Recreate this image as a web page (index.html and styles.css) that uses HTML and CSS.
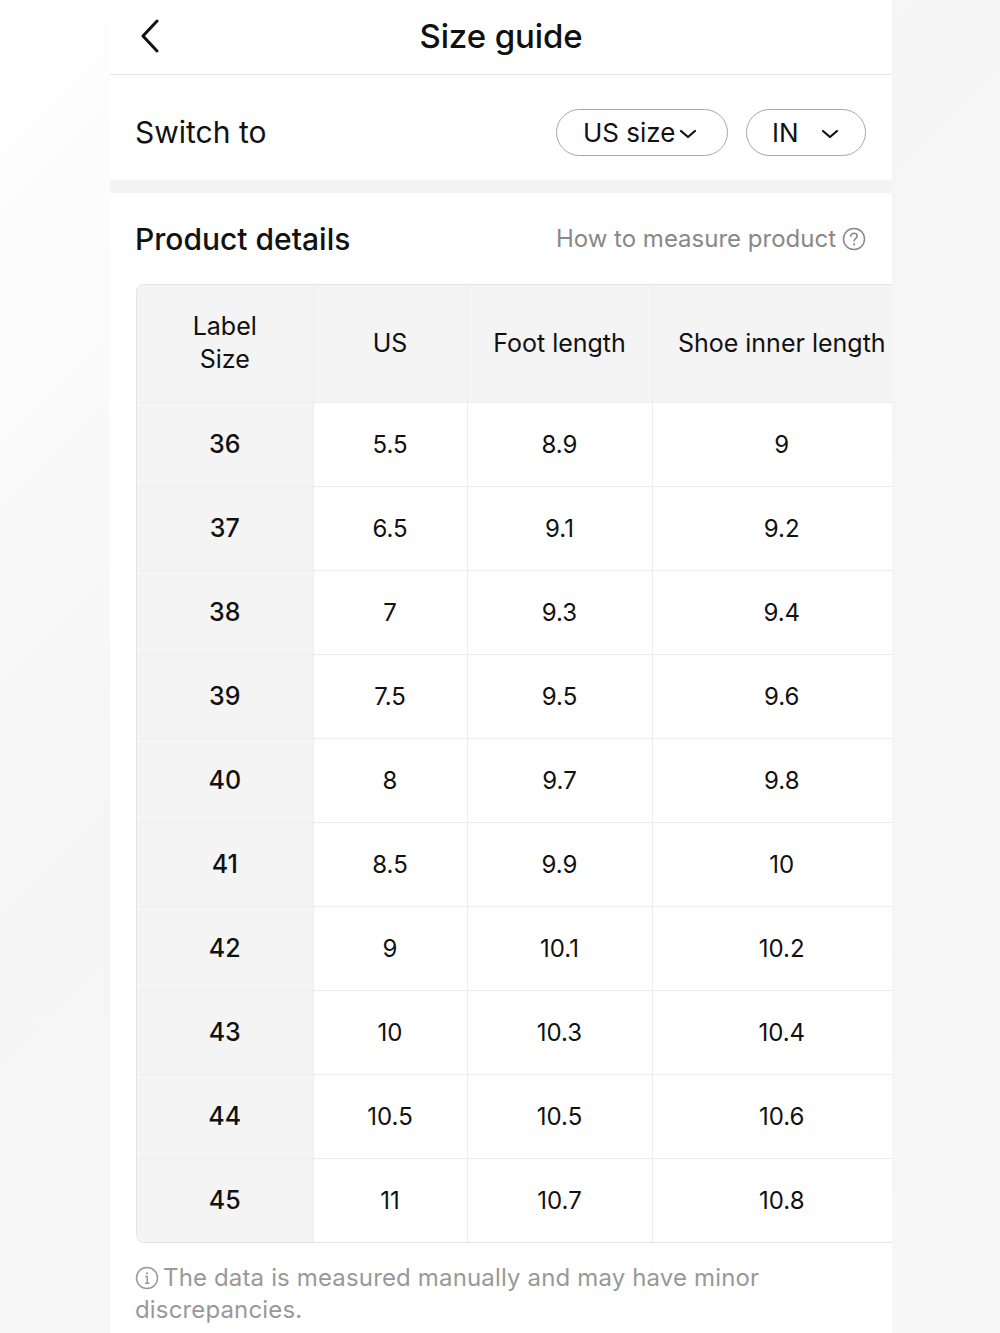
FILE: index.html
```html
<!DOCTYPE html>
<html lang="en">
<head>
<meta charset="utf-8">
<title>Size guide</title>
<link rel="stylesheet" href="styles.css">
</head>
<body>
<div class="panel">
  <header class="topbar">
    <svg class="back" width="20" height="34" viewBox="0 0 20 34"><path d="M16 2 L2 17 L16 32" fill="none" stroke="#111" stroke-width="3" stroke-linecap="round" stroke-linejoin="round"/></svg>
    <h1 class="title">Size guide</h1>
  </header>
  <section class="switch">
    <span class="switch-label">Switch to</span>
    <div class="pills">
      <div class="pill pill-us"><span>US size</span><svg width="18" height="10" viewBox="0 0 18 10"><path d="M2 2 L9 8 L16 2" fill="none" stroke="#111" stroke-width="2.2" stroke-linecap="round" stroke-linejoin="round"/></svg></div>
      <div class="pill pill-in"><span>IN</span><svg width="18" height="10" viewBox="0 0 18 10"><path d="M2 2 L9 8 L16 2" fill="none" stroke="#111" stroke-width="2.2" stroke-linecap="round" stroke-linejoin="round"/></svg></div>
    </div>
  </section>
  <div class="gap"></div>
  <section class="details">
    <div class="details-head">
      <h2 class="details-title">Product details</h2>
      <span class="measure">How to measure product<svg width="24" height="24" viewBox="0 0 24 24"><circle cx="12" cy="12" r="10.5" fill="none" stroke="#888" stroke-width="1.5"/><path d="M8.8 9.3 C8.8 7.4 10.2 6.3 12 6.3 C13.8 6.3 15.2 7.5 15.2 9.1 C15.2 11.2 12.1 11.5 12.1 14" fill="none" stroke="#888" stroke-width="1.6" stroke-linecap="round"/><circle cx="12.1" cy="17.4" r="1.1" fill="#888"/></svg></span>
    </div>
    <div class="table-wrap">
      <table class="sizes">
        <thead>
          <tr><th class="c1">Label<br>Size</th><th class="c2">US</th><th class="c3">Foot length</th><th class="c4">Shoe inner length</th></tr>
        </thead>
        <tbody>
          <tr><td>36</td><td>5.5</td><td>8.9</td><td>9</td></tr>
          <tr><td>37</td><td>6.5</td><td>9.1</td><td>9.2</td></tr>
          <tr><td>38</td><td>7</td><td>9.3</td><td>9.4</td></tr>
          <tr><td>39</td><td>7.5</td><td>9.5</td><td>9.6</td></tr>
          <tr><td>40</td><td>8</td><td>9.7</td><td>9.8</td></tr>
          <tr><td>41</td><td>8.5</td><td>9.9</td><td>10</td></tr>
          <tr><td>42</td><td>9</td><td>10.1</td><td>10.2</td></tr>
          <tr><td>43</td><td>10</td><td>10.3</td><td>10.4</td></tr>
          <tr><td>44</td><td>10.5</td><td>10.5</td><td>10.6</td></tr>
          <tr><td>45</td><td>11</td><td>10.7</td><td>10.8</td></tr>
        </tbody>
      </table>
    </div>
    <p class="note"><svg class="info" width="24" height="24" viewBox="0 0 24 24"><circle cx="12" cy="12" r="10.5" fill="none" stroke="#999" stroke-width="1.5"/><circle cx="12" cy="7.3" r="1.1" fill="#999"/><path d="M10.2 10.4 H12.3 V17.2 M10 17.2 H14.4" fill="none" stroke="#999" stroke-width="1.5"/></svg>The data is measured manually and may have minor discrepancies.</p>
  </section>
</div>
</body>
</html>
```
FILE: styles.css
```css
* { box-sizing: border-box; }
html, body { margin: 0; padding: 0; }
body {
  background: linear-gradient(135deg, #ffffff 0%, #f5f5f5 40%, #f7f7f7 100%);
  font-family: "Inter", "Liberation Sans", Arial, sans-serif;
  color: #111;
  min-height: 1333px;
}
.panel {
  width: 782px;
  margin-left: 110px;
  background: #fff;
  min-height: 1333px;
}
.topbar {
  height: 75px;
  border-bottom: 1px solid #e6e6e6;
  display: flex;
  align-items: center;
  justify-content: center;
  position: relative;
}
.back { position: absolute; left: 31px; top: 19px; }
.title {
  margin: 0 0 2px 0;
  font-size: 33px;
  font-weight: 500;
  letter-spacing: -0.1px;
}
.switch {
  height: 105px;
  display: flex;
  align-items: center;
  justify-content: space-between;
  padding: 9px 26px 0 25px;
}
.switch-label { font-size: 30px; font-weight: 400; }
.pills { display: flex; gap: 18px; }
.pill {
  height: 47px;
  border: 1.5px solid #a8a8a8;
  border-radius: 24px;
  display: flex;
  align-items: center;
  font-size: 26px;
}
.pill-us { width: 172px; padding-left: 26px; gap: 3px; }
.pill-in { width: 120px; padding-left: 25px; gap: 22px; }
.pill svg { margin-top: 3px; }
.gap { height: 13px; background: #f4f4f4; }
.details { padding: 0 0 0 26px; }
.details-head {
  height: 91px;
  display: flex;
  align-items: center;
  justify-content: space-between;
  padding-right: 26px;
}
.details-title { margin: 0 0 0 -1px; font-size: 30px; font-weight: 500; }
.measure {
  display: flex;
  align-items: center;
  gap: 6px;
  color: #888;
  font-size: 24px;
}
.table-wrap {
  overflow: hidden;
  border: 1px solid #e4e4e4;
  border-right: none;
  border-radius: 8px 0 0 8px;
}
.sizes {
  border-collapse: collapse;
  table-layout: fixed;
  width: 774px;
}
.sizes th, .sizes td {
  text-align: center;
  border-left: 1px solid #ececec;
  border-top: 1px solid #ececec;
  padding: 0;
}
.sizes th:first-child, .sizes td:first-child { border-left: none; }
.sizes thead tr th { border-top: none; background: #f4f4f4; height: 117px; font-weight: 400; font-size: 25px; line-height: 33px; }
.sizes td { height: 84px; font-size: 24px; }
.sizes td:first-child { background: #f4f4f4; font-weight: 500; font-size: 25px; }
.c1 { width: 176px; }
.c2 { width: 154px; }
.c3 { width: 185px; }
.c4 { width: 259px; }
.note {
  margin: 19px 26px 0 -1px;
  color: #999;
  font-size: 24px;
  line-height: 32px;
  letter-spacing: 0.15px;
}
.info { vertical-align: -4px; margin-right: 4px; }
```
